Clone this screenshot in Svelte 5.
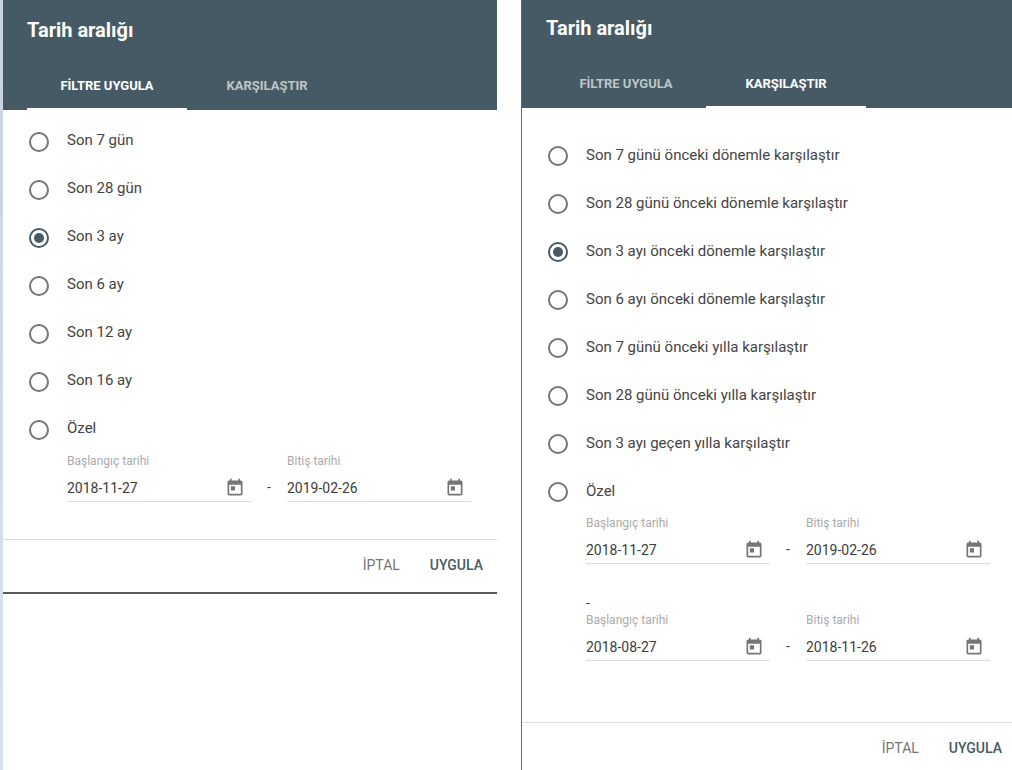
<script lang="ts">
	type Range = { start: string; end: string };

	let dialogs = $state([
		{
			id: 'filter',
			tab: 0,
			selected: 2,
			options: ['Son 7 gün', 'Son 28 gün', 'Son 3 ay', 'Son 6 ay', 'Son 12 ay', 'Son 16 ay', 'Özel'],
			ranges: [{ start: '2018-11-27', end: '2019-02-26' }] as Range[]
		},
		{
			id: 'compare',
			tab: 1,
			selected: 2,
			options: [
				'Son 7 günü önceki dönemle karşılaştır',
				'Son 28 günü önceki dönemle karşılaştır',
				'Son 3 ayı önceki dönemle karşılaştır',
				'Son 6 ayı önceki dönemle karşılaştır',
				'Son 7 günü önceki yılla karşılaştır',
				'Son 28 günü önceki yılla karşılaştır',
				'Son 3 ayı geçen yılla karşılaştır',
				'Özel'
			],
			ranges: [
				{ start: '2018-11-27', end: '2019-02-26' },
				{ start: '2018-08-27', end: '2018-11-26' }
			] as Range[]
		}
	]);

	const tabs = ['FİLTRE UYGULA', 'KARŞILAŞTIR'];
</script>

{#snippet dateField(id: string, label: string, range: Range, key: 'start' | 'end')}
	<div class="field">
		<label for={id}>{label}</label>
		<div class="line">
			<input {id} type="text" bind:value={range[key]} />
			<button type="button" class="calendar" aria-label={label}>
				<svg viewBox="0 0 24 24" width="20" height="20">
					<path d="M19 3h-1V1h-2v2H8V1H6v2H5c-1.1 0-2 .9-2 2v14c0 1.1.9 2 2 2h14c1.1 0 2-.9 2-2V5c0-1.1-.9-2-2-2zm0 16H5V8h14v11zM7 10h5v5H7z" />
				</svg>
			</button>
		</div>
	</div>
{/snippet}

<div class="page">
	{#each dialogs as dialog (dialog.id)}
		<section class="dialog {dialog.id}">
			<header>
				<h2>Tarih aralığı</h2>
				<div class="tabs" role="tablist">
					{#each tabs as tab, i}
						<button type="button" role="tab" aria-selected={dialog.tab === i} class:active={dialog.tab === i} onclick={() => (dialog.tab = i)}>{tab}</button>
					{/each}
				</div>
			</header>

			<div class="body">
				{#each dialog.options as option, i}
					<label class="option">
						<input type="radio" name={dialog.id} value={i} bind:group={dialog.selected} />
						<span>{option}</span>
					</label>
				{/each}
				{#each dialog.ranges as range, i}
					{#if i > 0}
						<div class="versus">-</div>
					{/if}
					<div class="range">
						{@render dateField(`${dialog.id}-start-${i}`, 'Başlangıç tarihi', range, 'start')}
						<span class="dash">-</span>
						{@render dateField(`${dialog.id}-end-${i}`, 'Bitiş tarihi', range, 'end')}
					</div>
				{/each}
			</div>

			<footer>
				<button type="button">İPTAL</button>
				<button type="button" class="apply">UYGULA</button>
			</footer>
		</section>
	{/each}
</div>

<style>
	:global(body) {
		background: #fff;
	}
	.page {
		display: grid;
		grid-template-columns: 494fr 491fr;
		align-items: start;
		gap: 24px;
		box-sizing: border-box;
		min-height: 100vh;
		border-left: 3px solid;
		border-image: linear-gradient(#c9d1e3, #d8e3f2) 1;
		color: #444;
		font-family: Roboto, "Liberation Sans", sans-serif;
	}
	.filter {
		border-bottom: 2px solid #5b595b;
	}
	.compare {
		align-self: stretch;
		border-left: 1px solid #666;
	}
	button, input {
		margin: 0;
		padding: 0;
		border: 0;
		background: none;
		font-family: inherit;
	}
	button {
		cursor: pointer;
	}

	header {
		padding: 16px 24px 0;
		background: #465a65;
		color: #fff;
	}
	.compare header {
		padding-top: 14px;
	}
	h2 {
		margin: 0 0 18px;
		font-size: 20px;
		font-weight: 700;
		line-height: 28px;
	}
	.tabs {
		display: flex;
	}
	.tabs button {
		box-sizing: border-box;
		width: 160px;
		height: 48px;
		border-bottom: 2px solid transparent;
		color: #bec5c9;
		font-size: 13px;
		font-weight: 700;
	}
	.tabs button.active {
		border-bottom-color: #fff;
		color: #fff;
	}

	.body {
		padding: 8px 26px 37px;
	}
	.compare .body {
		padding: 24px 22px 61px 26px;
	}
	.option {
		display: flex;
		align-items: center;
		gap: 18px;
		height: 48px;
		font-size: 15px;
		line-height: 20px;
		cursor: pointer;
	}
	.option span {
		padding-bottom: 4px;
	}
	.compare .option span {
		padding-bottom: 2px;
	}
	.option input {
		appearance: none;
		display: grid;
		place-items: center;
		box-sizing: border-box;
		flex: none;
		width: 20px;
		height: 20px;
		border: 2px solid #757575;
		border-radius: 50%;
	}
	.option input:checked {
		border-color: #465a65;
	}
	.option input:checked::before {
		content: '';
		width: 10px;
		height: 10px;
		border-radius: 50%;
		background: #465a65;
	}

	.range {
		display: flex;
		align-items: flex-end;
		padding-left: 38px;
	}
	.field {
		flex: 0 1 184px;
		min-width: 0;
	}
	.field label {
		display: block;
		margin-bottom: 7px;
		color: #aaa;
		font-size: 12px;
		line-height: 14px;
	}
	.line {
		display: flex;
		align-items: center;
		height: 26px;
		padding-right: 6px;
		border-bottom: 1px solid #dcdcdc;
	}
	.line input {
		flex: 1;
		min-width: 0;
		height: 26px;
		color: #3c3c3c;
		font-size: 14px;
	}
	.calendar {
		display: flex;
	}
	.calendar svg {
		fill: #757575;
	}
	.dash {
		width: 36px;
		font-size: 14px;
		line-height: 30px;
		text-align: center;
	}
	.versus {
		margin-top: 30px;
		padding: 0 0 1px 38px;
		font-size: 14px;
		line-height: 18px;
	}

	footer {
		display: flex;
		justify-content: flex-end;
		gap: 30px;
		padding: 7px 14px 9px;
		border-top: 1px solid #dedede;
	}
	.compare footer {
		padding: 7px 10px 4px;
	}
	footer button {
		height: 36px;
		color: #757575;
		font-size: 14px;
		font-weight: 400;
	}
	footer .apply {
		color: #465a65;
		font-weight: 500;
	}
</style>
